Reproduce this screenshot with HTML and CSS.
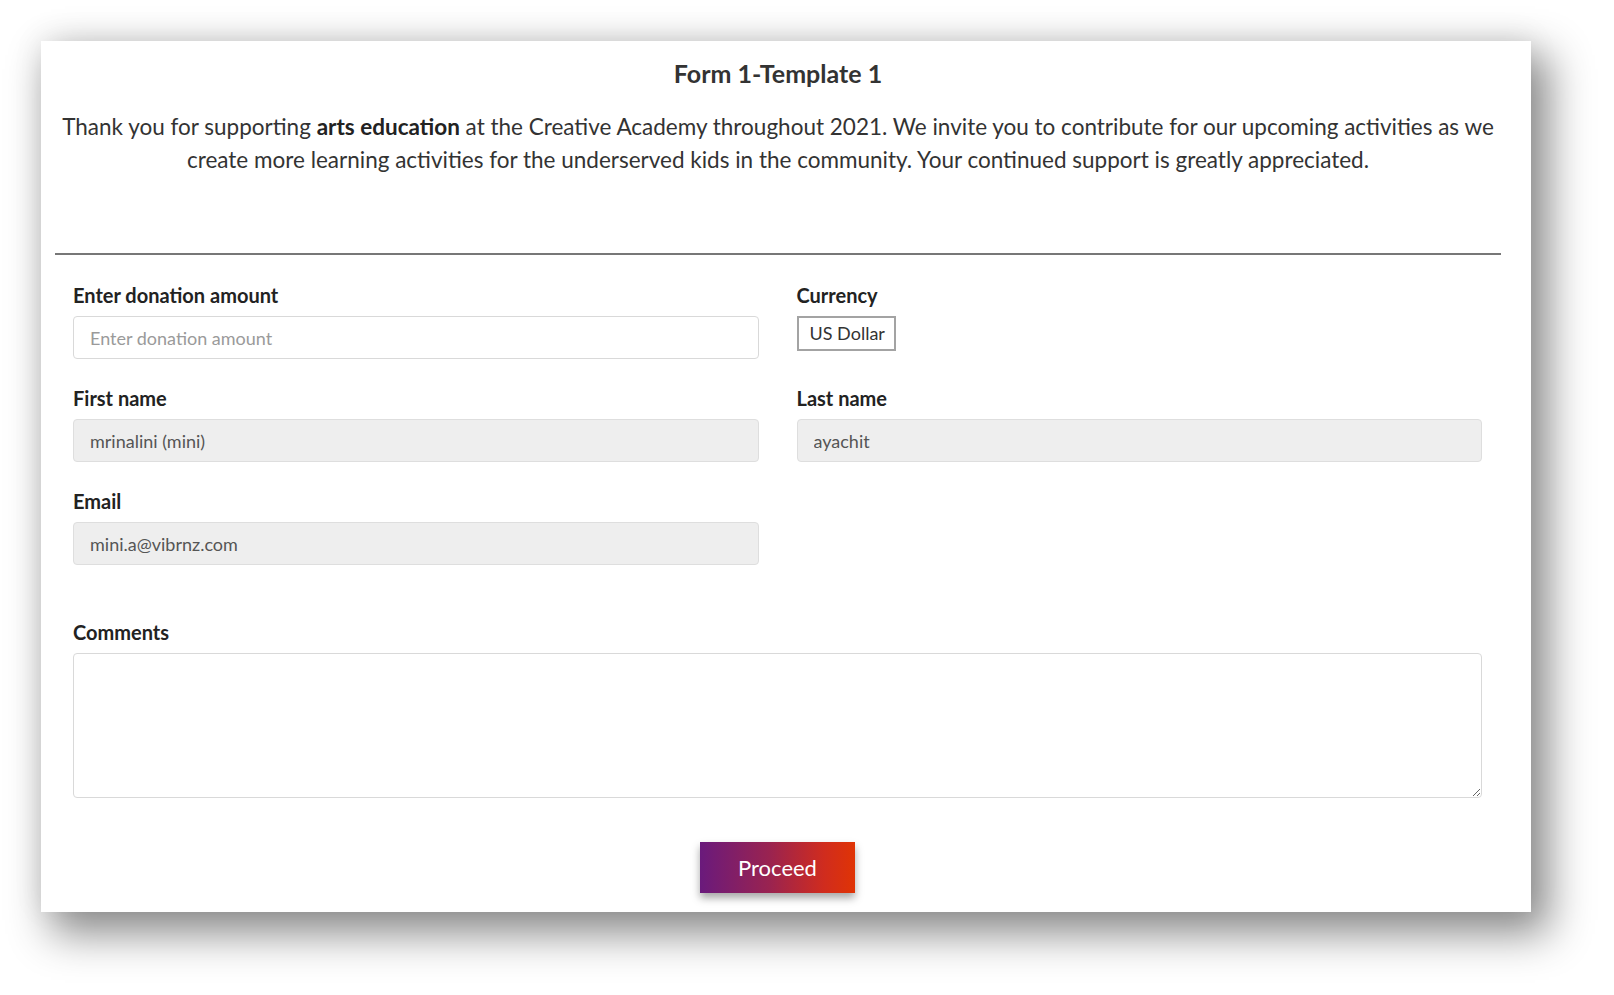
FILE: index.html
```html
<!DOCTYPE html>
<html lang="en">
<head>
<meta charset="utf-8">
<title>Form 1-Template 1</title>
<link rel="stylesheet" href="styles.css">
</head>
<body>
<div class="card">
  <div class="inner">
    <header class="intro">
      <h1 class="title">Form 1-Template 1</h1>
      <p class="lead">Thank you for supporting <strong>arts education</strong> at the Creative Academy throughout 2021. We invite you to contribute for our upcoming activities as we create more learning activities for the underserved kids in the community. Your continued support is greatly appreciated.</p>
    </header>
    <hr class="divider">
    <form class="form">
      <div class="grid">
        <div class="field">
          <label class="label" for="amount">Enter donation amount</label>
          <input class="input" id="amount" type="text" placeholder="Enter donation amount">
        </div>
        <div class="field">
          <label class="label" for="currency">Currency</label>
          <div class="select" id="currency">US Dollar</div>
        </div>
        <div class="field">
          <label class="label" for="first">First name</label>
          <input class="input input-disabled" id="first" type="text" value="mrinalini (mini)" readonly>
        </div>
        <div class="field">
          <label class="label" for="last">Last name</label>
          <input class="input input-disabled" id="last" type="text" value="ayachit" readonly>
        </div>
        <div class="field">
          <label class="label" for="email">Email</label>
          <input class="input input-disabled" id="email" type="text" value="mini.a@vibrnz.com" readonly>
        </div>
      </div>
      <div class="field field-comments">
        <label class="label" for="comments">Comments</label>
        <textarea class="textarea" id="comments"></textarea>
      </div>
      <div class="actions">
        <button class="btn" type="button">Proceed</button>
      </div>
    </form>
  </div>
</div>
</body>
</html>
```
FILE: styles.css
```css
html, body {
  margin: 0;
  padding: 0;
  background: #ffffff;
}
html {
  height: 100%;
  overflow: hidden;
}
body {
  height: 100%;
  box-sizing: border-box;
  overflow: hidden;
  padding: 41px 0 0 41px;
  font-family: Lato, "Open Sans", Arial, sans-serif;
  color: #333;
}
.card {
  width: 1490px;
  height: 871px;
  box-sizing: border-box;
  background: #ffffff;
  box-shadow: 14px 18px 40px 4px rgba(0,0,0,0.45), 0 -4px 30px rgba(0,0,0,0.07);
  padding: 17px 30px 0 14px;
}
.inner {
  display: flex;
  flex-direction: column;
}
.intro {
  text-align: center;
}
.title {
  margin: 0;
  font-size: 25px;
  line-height: 30px;
  font-weight: 700;
  color: #333;
}
.lead {
  margin: 22px 0 0;
  font-size: 22.5px;
  line-height: 33px;
  color: #333;
}
.lead strong {
  font-weight: 700;
  color: #222;
}
.divider {
  margin: 77px 0 0;
  border: 0;
  height: 2px;
  background: #777;
}
.form {
  padding: 28px 19px 0 18px;
  display: flex;
  flex-direction: column;
}
.grid {
  display: grid;
  grid-template-columns: 1fr 1fr;
  column-gap: 38px;
  row-gap: 27px;
}
.field {
  display: flex;
  flex-direction: column;
  align-items: stretch;
}
.label {
  font-size: 20px;
  line-height: 24px;
  font-weight: 700;
  color: #222;
  margin-bottom: 9px;
}
.input {
  height: 43px;
  box-sizing: border-box;
  border: 1px solid #d9d9d9;
  border-radius: 4px;
  padding: 0 16px;
  font-family: Lato, "Open Sans", Arial, sans-serif;
  font-size: 18px;
  color: #555;
  background: #fff;
  outline: none;
}
.input::placeholder {
  color: #9a9a9a;
}
.input-disabled {
  background: #eeeeee;
  border-color: #dedede;
}
.select {
  align-self: flex-start;
  width: 99px;
  height: 35px;
  box-sizing: border-box;
  border: 2px solid #a3a3a3;
  padding: 0 0 0 11px;
  font-size: 18px;
  line-height: 31px;
  color: #333;
  background: #fff;
}
.field-comments {
  margin-top: 55px;
}
.textarea {
  height: 145px;
  box-sizing: border-box;
  border: 1px solid #d9d9d9;
  border-radius: 4px;
  padding: 8px 16px;
  font-family: Lato, "Open Sans", Arial, sans-serif;
  font-size: 18px;
  resize: vertical;
  outline: none;
}
.actions {
  display: flex;
  justify-content: center;
  margin-top: 44px;
}
.btn {
  width: 155px;
  height: 51px;
  border: 0;
  border-radius: 0;
  background: linear-gradient(90deg, #6a1a7c 0%, #9a2350 45%, #d02c1e 80%, #e03405 100%);
  color: #fff;
  font-family: Lato, "Open Sans", Arial, sans-serif;
  font-size: 22px;
  box-shadow: 0 5px 8px rgba(0,0,0,0.35);
  cursor: pointer;
}
```
